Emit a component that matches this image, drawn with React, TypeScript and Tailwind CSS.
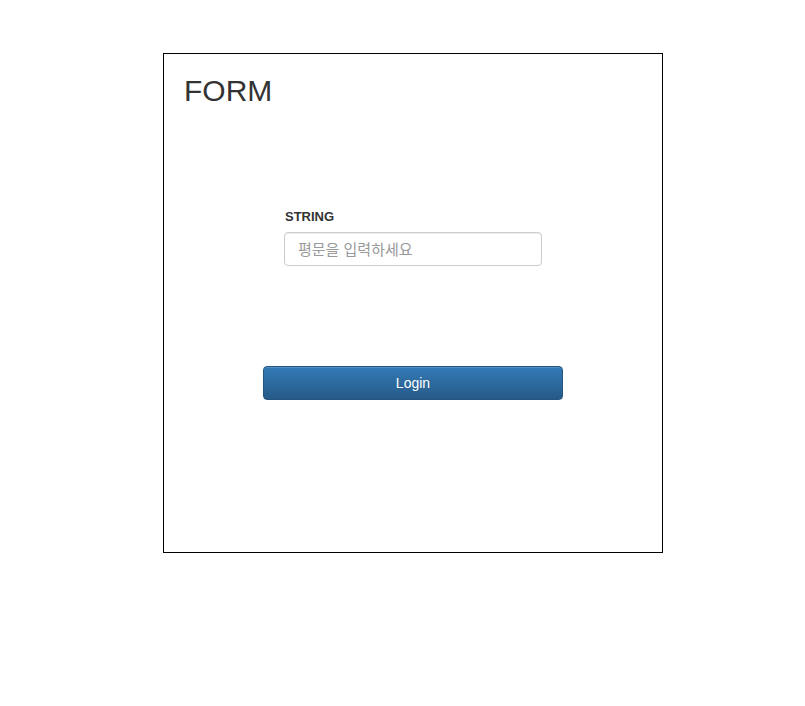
import React, { useState } from 'react';

export default function App() {
  const [text, setText] = useState('');

  return (
    <div className="min-h-[706px] w-full bg-white font-['Liberation_Sans','Noto_Sans_CJK_KR',sans-serif] text-[#333]">
      <div className="ml-[163px] pt-[53px]">
        <div className="w-[500px] h-[500px] border border-black px-5 pt-5 flex flex-col">
          {/* Title */}
          <h1 className="text-[30px] leading-[33px] font-normal">FORM</h1>

          {/* Input block */}
          <div className="mt-[100px] w-[258px] mx-auto flex flex-col">
            <label className="text-[13px] leading-[20px] font-bold pl-px mb-[5px]">STRING</label>
            <input
              type="text"
              value={text}
              onChange={(e) => setText(e.target.value)}
              placeholder="평문을 입력하세요"
              className="h-[34px] w-full border border-[#ccc] rounded-[4px] pl-[13px] pr-3 text-[15px] text-[#555] placeholder:text-[#999] outline-none shadow-[inset_0_1px_1px_rgba(0,0,0,0.075)]"
            />
          </div>

          {/* Submit */}
          <button
            type="button"
            className="mt-[100px] mx-auto w-[300px] h-[34px] rounded-[4px] border border-[#245580] bg-gradient-to-b from-[#337ab7] to-[#265a88] text-white text-[14px] shadow-[inset_0_1px_0_rgba(255,255,255,0.15)]"
          >
            Login
          </button>
        </div>
      </div>
    </div>
  );
}
